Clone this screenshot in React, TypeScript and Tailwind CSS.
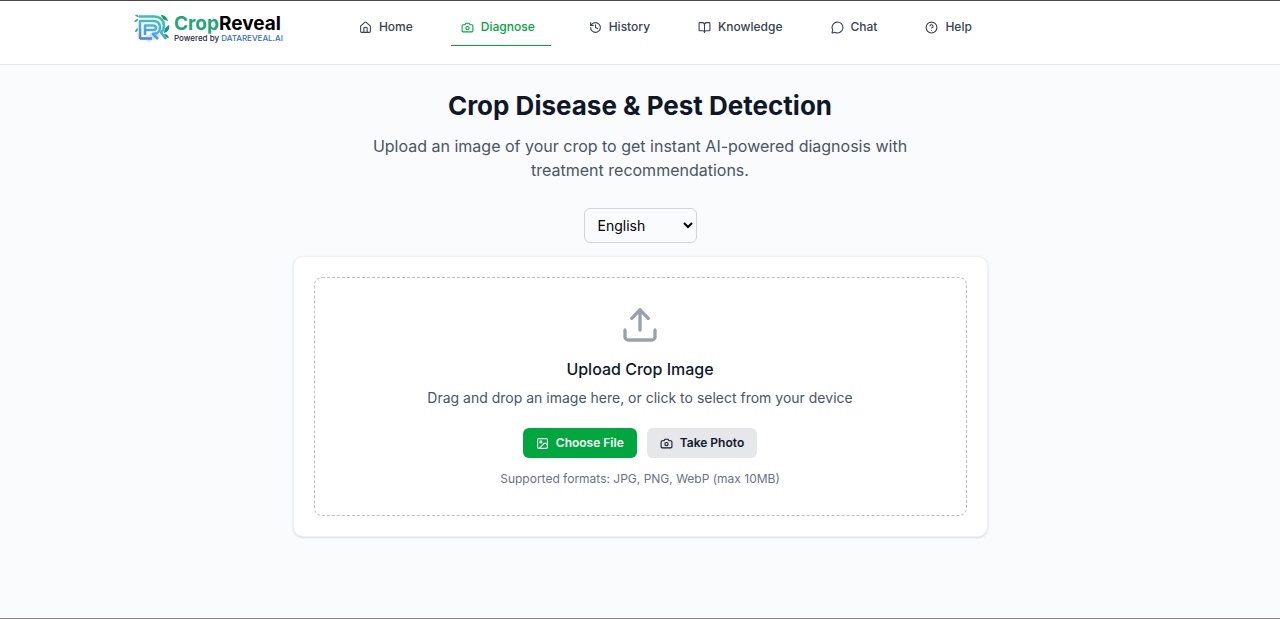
import { useState } from "react";
import {
  BookOpen,
  CircleHelp,
  History,
  House,
  Image as ImageIcon,
  MessageCircle,
  Upload,
} from "lucide-react";
import type { ReactNode } from "react";

// Camera with the flat-sided body
function CameraIcon({ className }: { className?: string }) {
  return (
    <svg
      viewBox="0 0 24 24"
      fill="none"
      stroke="currentColor"
      strokeWidth="2"
      strokeLinecap="round"
      strokeLinejoin="round"
      className={className}
      aria-hidden="true"
    >
      <path d="M14.5 4h-5L7 7H4a2 2 0 0 0-2 2v9a2 2 0 0 0 2 2h16a2 2 0 0 0 2-2V9a2 2 0 0 0-2-2h-3l-2.5-3z" />
      <circle cx="12" cy="13" r="3" />
    </svg>
  );
}

function LogoMark() {
  return (
    <svg viewBox="0 0 36 30" fill="none" className="w-9 h-[30px] shrink-0" aria-hidden="true">
      <defs>
        <linearGradient id="mark" x1="22" y1="2" x2="12" y2="27" gradientUnits="userSpaceOnUse">
          <stop stopColor="#2fc79b" />
          <stop offset="0.5" stopColor="#4cb3dd" />
          <stop offset="1" stopColor="#4a86ee" />
        </linearGradient>
      </defs>
      {/* leaves */}
      <path d="M1 2c2-.5 3 0 4 2-2 0-3-.5-4-2zM0 9c1-2 2-3 4-3 0 2-1 3-4 3zM1 19c0-2 1-3 3-4 0 3-1 4-3 4z" fill="#2aa876" />
      <path d="M27 2c3 0 6 2 7 6-4-.5-6-2.500-7-6zM35 12c1 4-1 7-5 8 0-4 2-6 5-8zM30 21c3 0 4 1.500 5 4-3 0-4-1.500-5-4z" fill="#159a68" />
      {/* pale shading behind the letters */}
      <path d="M9 26l12-9 6 6-12 6z" fill="#d3e5fa" />
      {/* interlaced D and R strokes */}
      <g stroke="url(#mark)" strokeWidth="2.6" strokeLinejoin="round">
        <path d="M5 3.500h15c6 0 10 4 10 9 0 3-1 5-3 7l5 6.500" />
        <path d="M6 26V8h13c5 0 7 2.500 7 6.500S23 21 19 21l5 5" />
        <path d="M6 25.500h12" />
        <path d="M11 22V12.500h8c2 0 3 1 3 2.300S21 17 19 17h-8" />
      </g>
    </svg>
  );
}

interface NavItem {
  label: string;
  icon: ReactNode;
}

const navItems: NavItem[] = [
  { label: "Home", icon: <House className="size-[13px]" /> },
  { label: "Diagnose", icon: <CameraIcon className="size-[13px]" /> },
  { label: "History", icon: <History className="size-[13px]" /> },
  { label: "Knowledge", icon: <BookOpen className="size-[13px]" /> },
  { label: "Chat", icon: <MessageCircle className="size-[13px]" /> },
  { label: "Help", icon: <CircleHelp className="size-[13px]" /> },
];

function Header() {
  const active = "Diagnose";

  return (
    <header className="h-[65px] bg-white border-t border-b border-t-[#4a4a4a] border-b-gray-200">
      <div className="mx-auto flex max-w-[1012px] items-start gap-[66px]">
        <a href="#home" className="flex shrink-0 items-center gap-1 pt-3">
          <LogoMark />
          <span className="flex flex-col">
            <span className="text-[19px] leading-5 font-bold text-black">
              <span className="text-[#22a577]">Crop</span>Reveal
            </span>
            <span className="text-[8px] leading-[9px] font-medium text-gray-800 whitespace-nowrap">
              Powered by <span className="text-[#2f6fd0]">DATAREVEAL.AI</span>
            </span>
          </span>
        </a>
        <nav className="flex items-start gap-[22px] pt-2">
          {navItems.map(({ label, icon }) => (
            <a
              key={label}
              href={`#${label.toLowerCase()}`}
              className={`flex items-center gap-[7px] h-[37px] pl-[10px] pr-4 text-xs font-medium border-b ${
                label === active
                  ? "text-[#00a63e] border-b-[#00a63e] mr-[6px]"
                  : "text-gray-700 border-b-transparent"
              }`}
            >
              {icon}
              {label}
            </a>
          ))}
        </nav>
      </div>
    </header>
  );
}

function UploadCard() {
  return (
    <section className="rounded-[10px] border border-gray-200/60 bg-white p-5 shadow-sm">
      <div className="flex flex-col items-center rounded-lg border border-dashed border-[#bcbec2] px-6 pt-[27px] pb-[26px] text-center">
        <Upload className="size-10 text-gray-400" />
        <h2 className="mt-3 text-base leading-6 font-medium text-gray-900">Upload Crop Image</h2>
        <p className="mt-[5px] text-sm leading-6 text-gray-600">
          Drag and drop an image here, or click to select from your device
        </p>
        <div className="mt-[18px] flex gap-[10px]">
          <button
            type="button"
            className="flex h-[30px] items-center gap-[7px] rounded-md bg-[#00a63e] px-[13px] text-xs font-semibold text-white"
          >
            <ImageIcon className="size-[13px]" />
            Choose File
          </button>
          <button
            type="button"
            className="flex h-[30px] items-center gap-[7px] rounded-md bg-gray-200 px-[13px] text-xs font-semibold text-gray-900"
          >
            <CameraIcon className="size-[13px]" />
            Take Photo
          </button>
        </div>
        <p className="mt-[11px] text-xs leading-5 text-gray-500">
          Supported formats: JPG, PNG, WebP (max 10MB)
        </p>
      </div>
    </section>
  );
}

export default function App() {
  const [language, setLanguage] = useState("English");

  return (
    <div className="flex min-h-screen flex-col border-b border-[#8a8a8a] bg-[#f9fbfc] font-['Inter',sans-serif]">
      <Header />
      <main className="mx-auto w-full max-w-[695px] pt-[25px] pb-10">
        <div className="text-center">
          <h1 className="text-[26px] leading-8 font-bold text-gray-900">
            Crop Disease &amp; Pest Detection
          </h1>
          <p className="mx-auto mt-3 max-w-[560px] text-base leading-6 text-gray-600">
            Upload an image of your crop to get instant AI-powered diagnosis with treatment
            recommendations.
          </p>
        </div>
        <div className="mt-[26px] mb-[13px] flex justify-center">
          <select
            aria-label="Language"
            value={language}
            onChange={(e) => setLanguage(e.target.value)}
            className="h-[35px] w-[113px] rounded-md border border-gray-300 bg-transparent px-[9px] text-sm text-black"
          >
            <option>English</option>
            <option>Hindi</option>
            <option>Spanish</option>
          </select>
        </div>
        <UploadCard />
      </main>
    </div>
  );
}
